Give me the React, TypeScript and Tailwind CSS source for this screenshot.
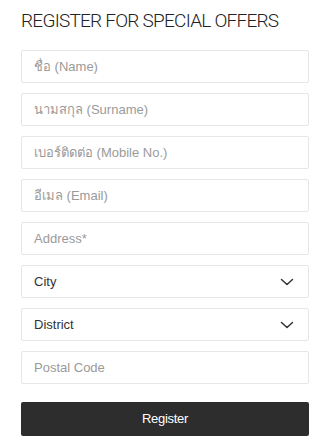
import React from 'react';

const fields = [
  'ชื่อ (Name)',
  'นามสกุล (Surname)',
  'เบอร์ติดต่อ (Mobile No.)',
  'อีเมล (Email)',
  'Address*',
];

const Chevron = () => (
  <svg className="w-[14px] h-[8px]" viewBox="0 0 14 8" fill="none" stroke="#333" strokeWidth={1.5} strokeLinecap="round" strokeLinejoin="round">
    <path d="M1.5 1.5l5.5 5 5.5-5" />
  </svg>
);

const App: React.FC = () => {
  return (
    <div className="w-[333px] h-[441px] bg-white font-['Liberation_Sans','Noto_Sans',sans-serif] px-[21px] pt-[10px]">
      <h1 className="font-['Roboto',sans-serif] text-[19px] leading-[22px] font-light text-[#222] tracking-[-0.75px] mb-[18px]">
        REGISTER FOR SPECIAL OFFERS
      </h1>

      <form className="flex flex-col gap-[10px] w-[288px]" onSubmit={(e) => e.preventDefault()}>
        {fields.map((f) => (
          <input
            key={f}
            placeholder={f}
            className="h-[33px] w-full border border-[#e6e6e6] rounded-[2px] px-[12px] text-[13px] text-[#333] placeholder:text-[#9a9a9a] outline-none"
          />
        ))}

        {['City', 'District'].map((s) => (
          <div key={s} className="h-[33px] w-full border border-[#e6e6e6] rounded-[2px] pl-[12px] pr-[14px] flex items-center justify-between text-[13px] text-[#333]">
            <span>{s}</span>
            <Chevron />
          </div>
        ))}

        <input
          placeholder="Postal Code"
          className="h-[33px] w-full border border-[#e6e6e6] rounded-[2px] px-[12px] text-[13px] text-[#333] placeholder:text-[#9a9a9a] outline-none"
        />

        <button
          type="submit"
          className="mt-[8px] h-[34px] w-full bg-[#2d2d2d] rounded-[2px] text-white text-[13px] tracking-[-0.3px]"
        >
          Register
        </button>
      </form>
    </div>
  );
};

export default App;
